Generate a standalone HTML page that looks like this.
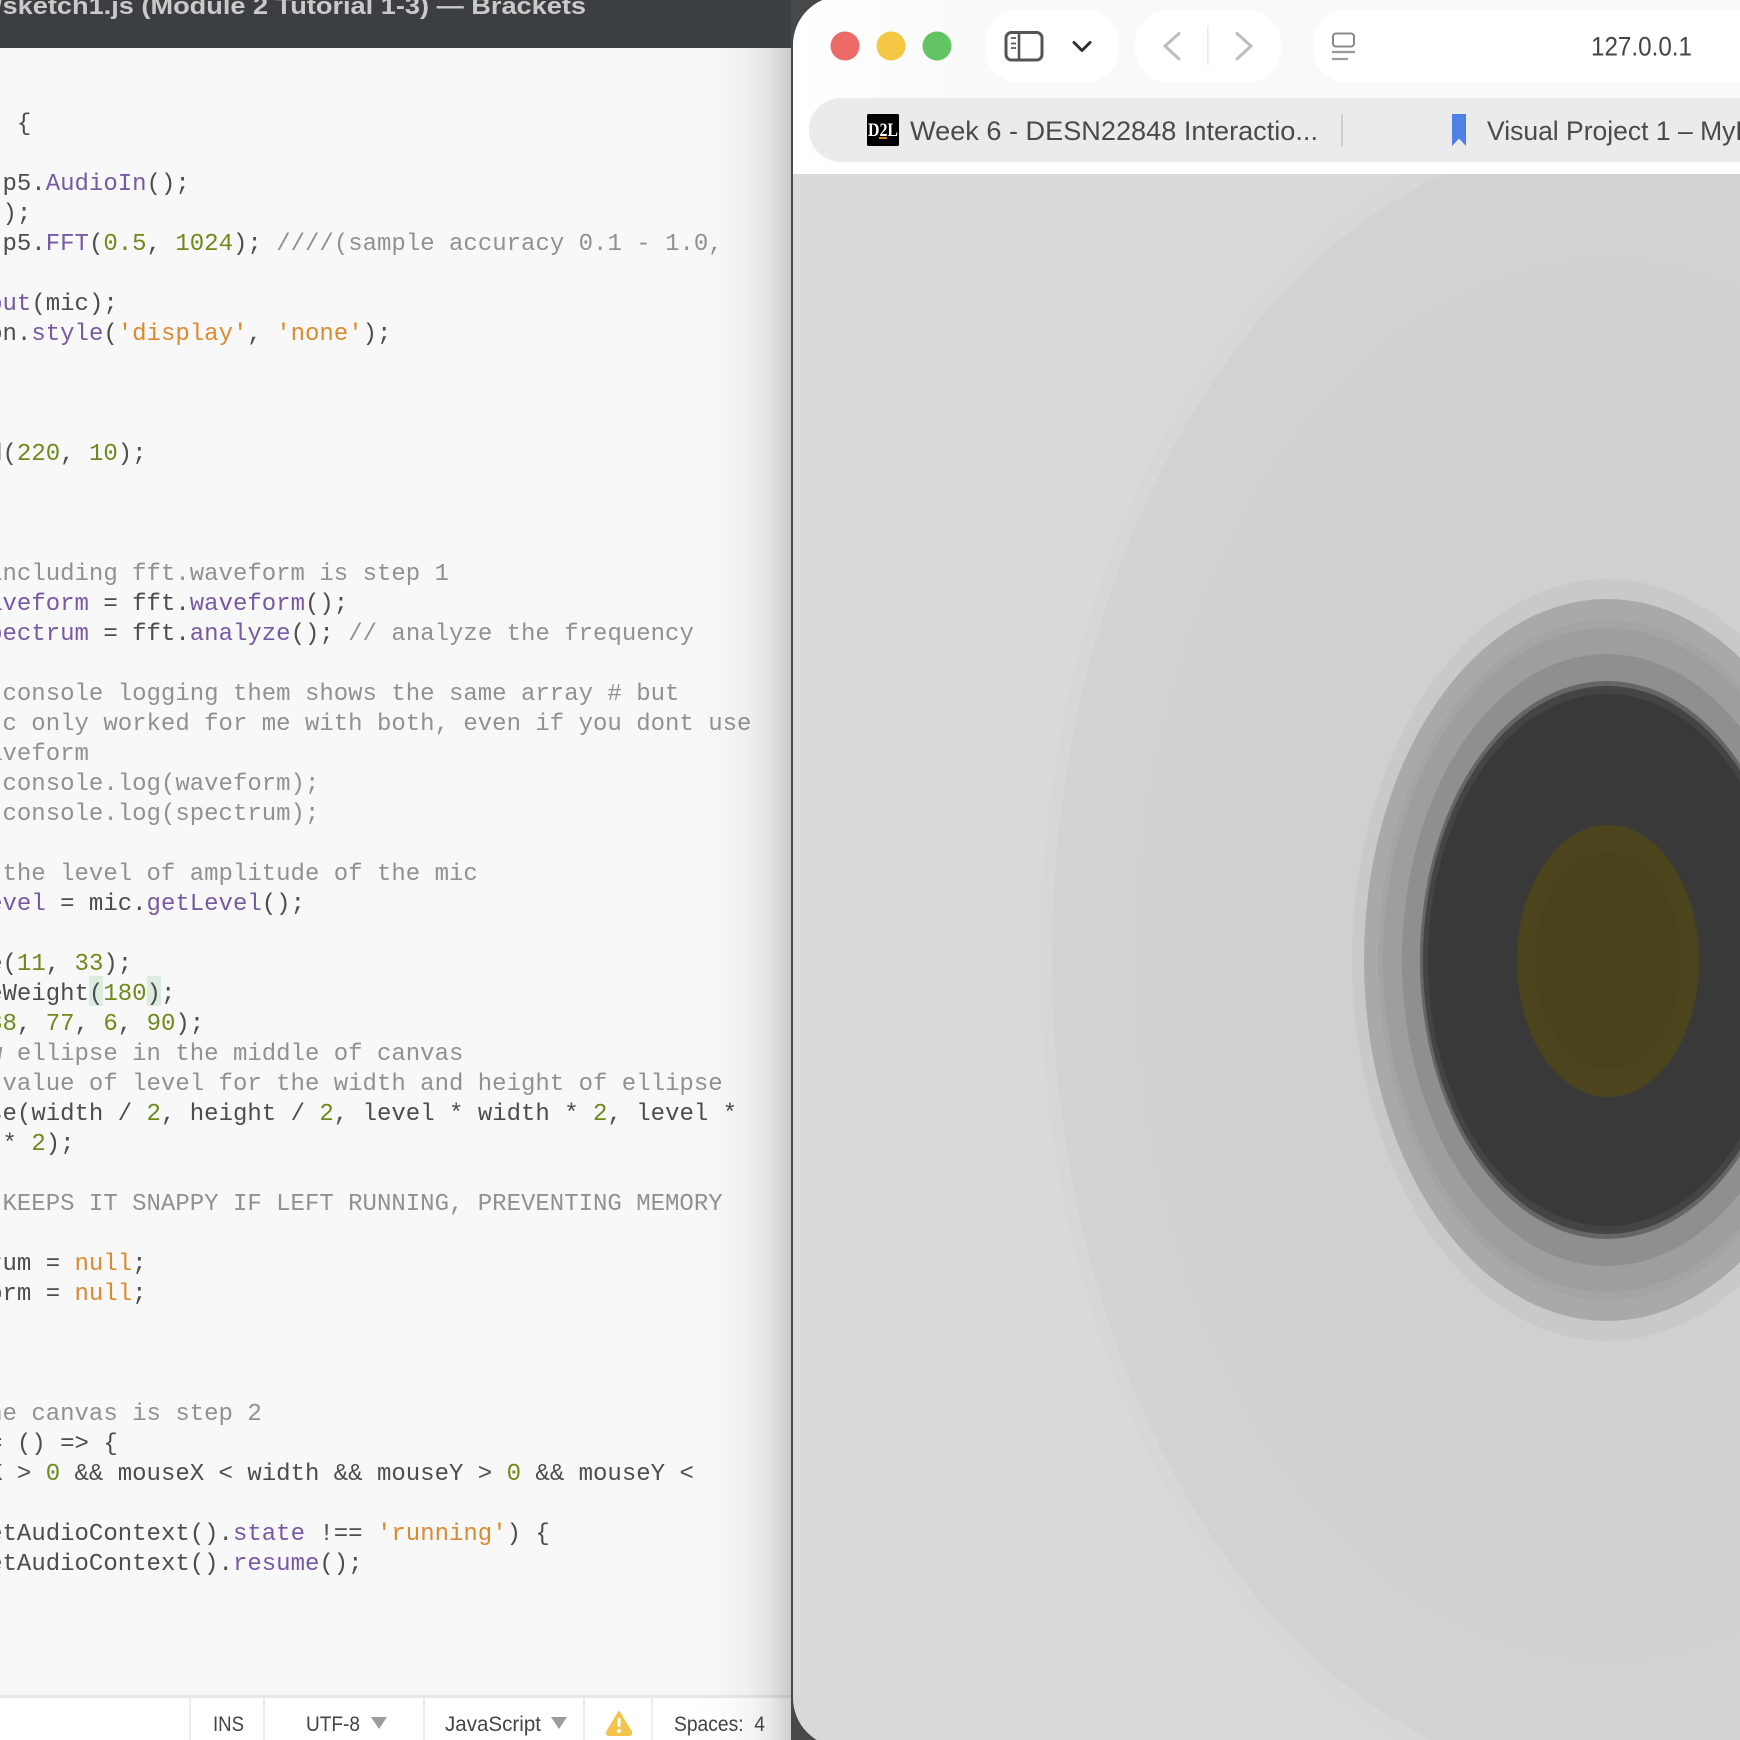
<!DOCTYPE html>
<html><head><meta charset="utf-8"><title>Brackets and Safari</title>
<style>
html,body{margin:0;padding:0;width:1740px;height:1740px;overflow:hidden;background:#f8f8f8}
#root{position:relative;width:1740px;height:1740px;overflow:hidden}
#titlebar{position:absolute;left:0;top:0;width:800px;height:48px;background:#3c3f41}
#editor{position:absolute;left:0;top:48px;width:792px;height:1650px;background:#f8f8f8}
#status{position:absolute;left:0;top:1695px;width:792px;height:45px;background:#fff;border-top:3px solid #e8e8e8;box-sizing:border-box}
.d{position:absolute;top:1698px;width:2px;height:42px;background:#ececec}
.hl{position:absolute;top:976px;width:14.4px;height:30px;background:#dcece0}
#code{position:absolute;left:0;top:110px;width:791px;height:1585px;overflow:hidden;font:24px/30px "Liberation Mono",monospace;color:#4d4d4d;filter:blur(.35px)}
#code div{position:absolute;left:2.5px;white-space:pre}
#code div.o{left:-11.9px}
.p{color:#775aa3}.n{color:#6f8a1c}.s{color:#dc8a2e}.c{color:#919191}
#shade{position:absolute;left:690px;top:48px;width:101px;height:1692px;background:linear-gradient(90deg,rgba(0,0,0,0) 0,rgba(0,0,0,.01) 35%,rgba(0,0,0,.04) 60%,rgba(0,0,0,.09) 80%,rgba(0,0,0,.19) 100%)}
#edge{position:absolute;left:791px;top:0;width:70px;height:1740px;background:#474849}
svg{position:absolute;left:0;top:0}
</style></head><body><div id="root">
<div id="titlebar"></div>
<div id="editor"></div>
<div id="status"></div>
<div class="d" style="left:189px"></div><div class="d" style="left:263px"></div><div class="d" style="left:423px"></div><div class="d" style="left:583px"></div><div class="d" style="left:651px"></div>
<div class="hl" style="left:88.5px"></div><div class="hl" style="left:146.5px"></div>
<div id="code">
<div style="top:0"> {</div>
<div style="top:60px">p5.<span class="p">AudioIn</span>();</div>
<div style="top:90px">);</div>
<div style="top:120px">p5.<span class="p">FFT</span>(<span class="n">0.5</span>, <span class="n">1024</span>); <span class="c">////(sample accuracy 0.1 - 1.0,</span></div>
<div class="o" style="top:180px"><span class="p">put</span>(mic);</div>
<div class="o" style="top:210px">on.<span class="p">style</span>(<span class="s">'display'</span>, <span class="s">'none'</span>);</div>
<div class="o" style="top:330px">d(<span class="n">220</span>, <span class="n">10</span>);</div>
<div class="o c" style="top:450px">including fft.waveform is step 1</div>
<div class="o" style="top:480px"><span class="p">aveform</span> = fft.<span class="p">waveform</span>();</div>
<div class="o" style="top:510px"><span class="p">pectrum</span> = fft.<span class="p">analyze</span>(); <span class="c">// analyze the frequency</span></div>
<div class="c" style="top:570px">console logging them shows the same array # but</div>
<div class="c" style="top:600px">c only worked for me with both, even if you dont use</div>
<div class="o c" style="top:630px">aveform</div>
<div class="c" style="top:660px">console.log(waveform);</div>
<div class="c" style="top:690px">console.log(spectrum);</div>
<div class="c" style="top:750px">the level of amplitude of the mic</div>
<div class="o" style="top:780px"><span class="p">evel</span> = mic.<span class="p">getLevel</span>();</div>
<div class="o" style="top:840px">e(<span class="n">11</span>, <span class="n">33</span>);</div>
<div class="o" style="top:870px">eWeight(<span class="n">180</span>);</div>
<div class="o" style="top:900px"><span class="n">88</span>, <span class="n">77</span>, <span class="n">6</span>, <span class="n">90</span>);</div>
<div class="o c" style="top:930px">w ellipse in the middle of canvas</div>
<div class="c" style="top:960px">value of level for the width and height of ellipse</div>
<div class="o" style="top:990px">se(width / <span class="n">2</span>, height / <span class="n">2</span>, level * width * <span class="n">2</span>, level *</div>
<div style="top:1020px">* <span class="n">2</span>);</div>
<div class="c" style="top:1080px">KEEPS IT SNAPPY IF LEFT RUNNING, PREVENTING MEMORY</div>
<div class="o" style="top:1140px">rum = <span class="s">null</span>;</div>
<div class="o" style="top:1170px">orm = <span class="s">null</span>;</div>
<div class="o c" style="top:1290px">he canvas is step 2</div>
<div class="o" style="top:1320px">= () =&gt; {</div>
<div class="o" style="top:1350px">X &gt; <span class="n">0</span> &amp;&amp; mouseX &lt; width &amp;&amp; mouseY &gt; <span class="n">0</span> &amp;&amp; mouseY &lt;</div>
<div class="o" style="top:1410px">etAudioContext().<span class="p">state</span> !== <span class="s">'running'</span>) {</div>
<div class="o" style="top:1440px">etAudioContext().<span class="p">resume</span>();</div>
</div>
<div id="shade"></div>
<div id="edge"></div>
<svg width="1740" height="1740" viewBox="0 0 1740 1740" font-family="'Liberation Sans',sans-serif">
<defs><clipPath id="win"><rect x="793" y="-4" width="1100" height="1751" rx="49" ry="49"/></clipPath>
<linearGradient id="tb" gradientUnits="userSpaceOnUse" x1="793" y1="0" x2="1000" y2="0"><stop offset="0" stop-color="#fff"/><stop offset="1" stop-color="#f9f9f9"/></linearGradient></defs>
<text x="-5" y="14" font-size="24" font-weight="700" fill="#c9caca" textLength="591" lengthAdjust="spacingAndGlyphs">/sketch1.js (Module 2 Tutorial 1-3) — Brackets</text>
<g fill="#444" font-size="21">
<text x="213" y="1731" textLength="31" lengthAdjust="spacingAndGlyphs">INS</text>
<text x="306" y="1731" textLength="54" lengthAdjust="spacingAndGlyphs">UTF-8</text>
<text x="445" y="1731" textLength="96" lengthAdjust="spacingAndGlyphs">JavaScript</text>
<text x="674" y="1731" textLength="91" lengthAdjust="spacingAndGlyphs" xml:space="preserve">Spaces:  4</text>
</g>
<path d="M371 1717h16l-8 12zM551 1717h16l-8 12z" fill="#9c9c9c"/>
<path d="M619 1712L631 1732Q632 1735 629 1735H609Q606 1735 607 1732Z" fill="#f4c44c" stroke="#f4c44c" stroke-width="2" stroke-linejoin="round"/>
<rect x="617.6" y="1718" width="3" height="9" rx="1" fill="#fff"/><circle cx="619" cy="1731" r="1.9" fill="#fff"/>
<g clip-path="url(#win)">
<rect x="793" y="-4" width="1000" height="1751" fill="#d9d9d9"/>
<ellipse cx="1607" cy="960" rx="567" ry="840" fill="#d7d7d7"/>
<ellipse cx="1607" cy="960" rx="555" ry="822" fill="#d2d2d2"/>
<ellipse cx="1607" cy="960" rx="470" ry="700" fill="#d1d1d1"/>
<ellipse cx="1607" cy="960" rx="457" ry="685" fill="#d0d0d0"/>
<rect x="793" y="-4" width="1000" height="178" fill="url(#tb)"/>
<rect x="793" y="160" width="1000" height="14" fill="#fff"/>
<ellipse cx="1607" cy="960" rx="255" ry="381" fill="#c9c9c9"/>
<ellipse cx="1607" cy="960" rx="243" ry="361" fill="#a9a9a9"/>
<ellipse cx="1607" cy="960" rx="229" ry="340" fill="#a4a4a4"/>
<ellipse cx="1607" cy="960" rx="224" ry="332" fill="#9e9e9e"/>
<ellipse cx="1607" cy="960" rx="205" ry="306" fill="#8f8f8f"/>
<ellipse cx="1607" cy="960" rx="187" ry="279" fill="#656565"/>
<ellipse cx="1607" cy="960" rx="184" ry="274" fill="#444444"/>
<ellipse cx="1607" cy="960" rx="179" ry="266" fill="#393939"/>
<ellipse cx="1608" cy="961" rx="91" ry="136" fill="#4c441c"/>
<ellipse cx="1608" cy="961" rx="73" ry="108" fill="#4a421b"/>
<circle cx="845" cy="46" r="14.5" fill="#ec6b68"/>
<circle cx="891" cy="46" r="14.5" fill="#f4c845"/>
<circle cx="937" cy="46" r="14.5" fill="#62c462"/>
<rect x="985" y="10" width="134" height="72" rx="33" fill="#fff"/>
<rect x="1135" y="10" width="146" height="72" rx="33" fill="#fff"/>
<rect x="1313" y="10" width="500" height="72" rx="33" fill="#fff"/>
<rect x="1006" y="32.5" width="36" height="27.5" rx="5.5" fill="none" stroke="#555" stroke-width="3"/>
<path d="M1019 32.5V60" stroke="#555" stroke-width="2.6" fill="none"/>
<path d="M1011 38h5M1011 43.5h5M1011 48h5" stroke="#555" stroke-width="1.8" fill="none"/>
<path d="M1074 42.5L1082 50.5L1090 42.5" stroke="#2f2f2f" stroke-width="3" fill="none" stroke-linecap="round" stroke-linejoin="round"/>
<path d="M1179 33.5L1165 46L1179 59" stroke="#bdbdbd" stroke-width="3" fill="none" stroke-linecap="round" stroke-linejoin="round"/>
<path d="M1237 33.5L1251 46L1237 59" stroke="#bdbdbd" stroke-width="3" fill="none" stroke-linecap="round" stroke-linejoin="round"/>
<rect x="1207" y="26" width="1.6" height="39" fill="#e9e9e9"/>
<rect x="1333" y="33.5" width="21" height="13" rx="3" fill="none" stroke="#888" stroke-width="2"/>
<path d="M1332 52h23" stroke="#999" stroke-width="2.2"/><path d="M1332 59h16" stroke="#999" stroke-width="2.2"/>
<text x="1591" y="55.5" font-size="26.5" fill="#444" textLength="101" lengthAdjust="spacingAndGlyphs">127.0.0.1</text>
<rect x="809" y="98" width="1000" height="64" rx="32" fill="#ebebeb"/>
<rect x="867" y="114" width="32" height="32" rx="1.5" fill="#000"/>
<text x="883" y="136" font-family="'Liberation Serif',serif" font-weight="700" font-size="19" fill="#fff" text-anchor="middle" textLength="30" lengthAdjust="spacingAndGlyphs">D2L</text>
<rect x="879" y="137" width="8" height="2" fill="#d9822b"/>
<text x="910" y="140" font-size="26.5" fill="#4a4a4a" textLength="408" lengthAdjust="spacingAndGlyphs">Week 6 - DESN22848 Interactio...</text>
<rect x="1341" y="114" width="2" height="32" fill="#cfcfcf"/>
<path d="M1452 114h14v32l-7-7.5-7 7.5z" fill="#4f80e8"/>
<text x="1487" y="140" font-size="26.5" fill="#4a4a4a">Visual Project 1 – MyL</text>
</g>
</svg>
</div></body></html>
